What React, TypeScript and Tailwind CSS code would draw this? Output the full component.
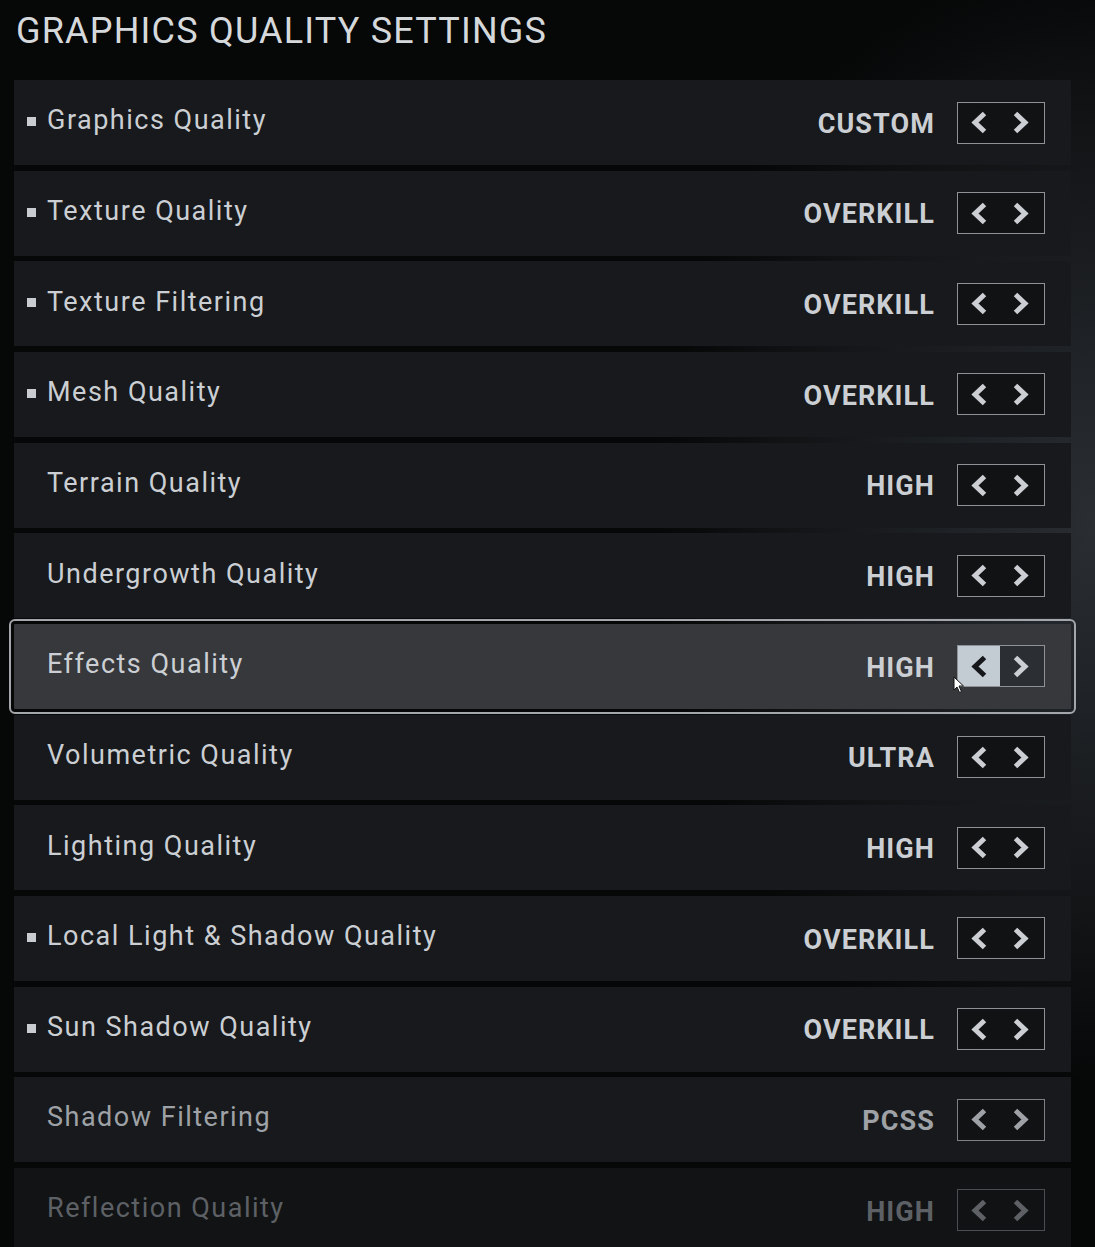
import React from 'react';

type Row = {
  label: string;
  value: string;
  bullet?: boolean;
  active?: boolean;
  tone?: 'dim' | 'faint';
};

const rows: Row[] = [
  { label: 'Graphics Quality', value: 'CUSTOM', bullet: true },
  { label: 'Texture Quality', value: 'OVERKILL', bullet: true },
  { label: 'Texture Filtering', value: 'OVERKILL', bullet: true },
  { label: 'Mesh Quality', value: 'OVERKILL', bullet: true },
  { label: 'Terrain Quality', value: 'HIGH' },
  { label: 'Undergrowth Quality', value: 'HIGH' },
  { label: 'Effects Quality', value: 'HIGH', active: true },
  { label: 'Volumetric Quality', value: 'ULTRA' },
  { label: 'Lighting Quality', value: 'HIGH' },
  { label: 'Local Light & Shadow Quality', value: 'OVERKILL', bullet: true },
  { label: 'Sun Shadow Quality', value: 'OVERKILL', bullet: true },
  { label: 'Shadow Filtering', value: 'PCSS', tone: 'dim' },
  { label: 'Reflection Quality', value: 'HIGH', tone: 'faint' },
];

function Chevron({ dir }: { dir: 'left' | 'right' }) {
  return (
    <svg width="18" height="23" viewBox="0 0 18 23">
      <path
        d={dir === 'left' ? 'M14.5 2.5 L5 11.5 L14.5 20.5' : 'M3.5 2.5 L13 11.5 L3.5 20.5'}
        fill="none"
        stroke="currentColor"
        strokeWidth="5"
        strokeLinejoin="miter"
      />
    </svg>
  );
}

function Cursor() {
  return (
    <svg width="12" height="18" viewBox="0 0 12 18" className="absolute left-[-5px] top-[30px]">
      <path d="M1 1 L1 14 L4 11 L6.5 16.5 L8.5 15.5 L6 10 L10.5 10 Z" fill="#ffffff" stroke="#111" strokeWidth="1" />
    </svg>
  );
}

function SettingRow({ row }: { row: Row }) {
  const text =
    row.tone === 'faint' ? 'text-[#5d6165]' : row.tone === 'dim' ? 'text-[#9ea2a6]' : 'text-[#cbcfd3]';
  const border =
    row.tone === 'faint' ? 'border-[#4a4d51]' : row.tone === 'dim' ? 'border-[#7d8185]' : 'border-[#8e9296]';

  return (
    <div
      className={
        'flex items-center h-[85px] pl-[13px] pr-[26px] ' +
        (row.active
          ? 'bg-[#36383c] outline-2 outline-[#a3a7ab] outline-offset-[3px] rounded-[1px]'
          : row.tone === 'faint'
            ? 'bg-[#121315]'
            : 'bg-[#17191c]')
      }
    >
      <div className={'w-[9px] h-[9px] mr-[11px] mb-[2px] ' + (row.bullet ? 'bg-[#c9cdd1]' : '')} />
      <span className={'text-[27px] tracking-[1.5px] mb-[4px] ' + text}>{row.label}</span>
      <span className={'ml-auto mt-[3px] text-[27px] font-bold tracking-[1.1px] ' + text}>{row.value}</span>
      <div
        className={
          'relative ml-[22px] flex w-[88px] h-[42px] border ' + border + (row.active ? '' : ' bg-[#101214]')
        }
      >
        <div
          className={
            'flex-1 flex items-center justify-center ' +
            (row.active ? 'bg-[#c4ccd3] text-[#15171a]' : text)
          }
        >
          <Chevron dir="left" />
        </div>
        <div
          className={
            'flex-1 flex items-center justify-center pr-[2px] ' + (row.active ? 'bg-[#2b2e32] ' : '') + text
          }
        >
          <Chevron dir="right" />
        </div>
        {row.active && <Cursor />}
      </div>
    </div>
  );
}

export default function App() {
  return (
    <div className="h-[1247px] w-[1095px] overflow-hidden bg-[radial-gradient(ellipse_40%_45%_at_100%_42%,#2a2e33_0%,#121416_70%,#060707_100%)] font-['Roboto','Liberation_Sans',sans-serif]">
      <div className="h-[80px] pl-[16px] pt-[8px]">
        <h1 className="text-[36px] leading-[46px] tracking-[1.2px] text-[#d6d9dc] font-normal">
          GRAPHICS QUALITY SETTINGS
        </h1>
      </div>
      <div className="ml-[14px] w-[1057px] flex flex-col gap-[5.67px]">
        {rows.map((r) => (
          <SettingRow key={r.label} row={r} />
        ))}
      </div>
    </div>
  );
}
